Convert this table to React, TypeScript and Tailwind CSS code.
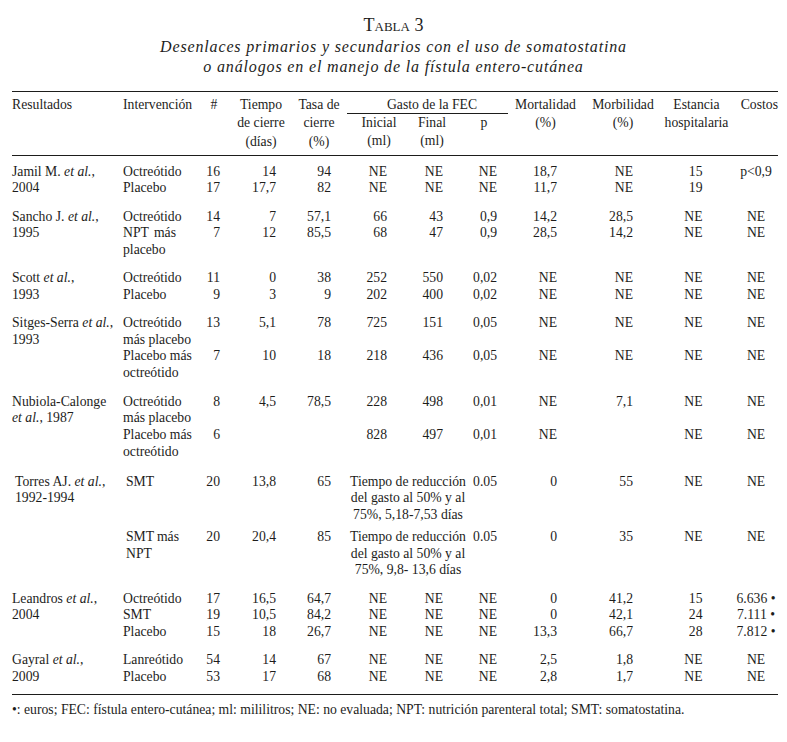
import type { ReactNode } from "react";

type Row = {
  intervention: ReactNode;
  n: string;
  tiempo?: string;
  tasa?: string;
  inicial?: string;
  final?: string;
  gasto?: string[];
  p: string;
  mort?: string;
  morb?: string;
  est?: string;
  cost?: string;
};

type Study = {
  author: ReactNode;
  rows: Row[];
  gap: string;
  indent?: boolean;
};

const Al = () => <i>et al.</i>;

const Spread = ({ a, b }: { a: string; b: string }) => (
  <span className="flex w-[53px] justify-between">
    <span>{a}</span>
    <span>{b}</span>
  </span>
);

const studies: Study[] = [
  {
    author: (<>Jamil M. <Al />,<br />2004</>),
    gap: "pt-0",
    rows: [
      { intervention: "Octreótido", n: "16", tiempo: "14", tasa: "94", inicial: "NE", final: "NE", p: "NE", mort: "18,7", morb: "NE", est: "15", cost: "p<0,9" },
      { intervention: "Placebo", n: "17", tiempo: "17,7", tasa: "82", inicial: "NE", final: "NE", p: "NE", mort: "11,7", morb: "NE", est: "19" },
    ],
  },
  {
    author: (<>Sancho J. <Al />,<br />1995</>),
    gap: "pt-[11.6px]",
    rows: [
      { intervention: "Octreótido", n: "14", tiempo: "7", tasa: "57,1", inicial: "66", final: "43", p: "0,9", mort: "14,2", morb: "28,5", est: "NE", cost: "NE" },
      { intervention: (<><Spread a="NPT" b="más" />placebo</>), n: "7", tiempo: "12", tasa: "85,5", inicial: "68", final: "47", p: "0,9", mort: "28,5", morb: "14,2", est: "NE", cost: "NE" },
    ],
  },
  {
    author: (<>Scott <Al />,<br />1993</>),
    gap: "pt-[11.4px]",
    rows: [
      { intervention: "Octreótido", n: "11", tiempo: "0", tasa: "38", inicial: "252", final: "550", p: "0,02", mort: "NE", morb: "NE", est: "NE", cost: "NE" },
      { intervention: "Placebo", n: "9", tiempo: "3", tasa: "9", inicial: "202", final: "400", p: "0,02", mort: "NE", morb: "NE", est: "NE", cost: "NE" },
    ],
  },
  {
    author: (<>Sitges-Serra <Al />,<br />1993</>),
    gap: "pt-[11.6px]",
    rows: [
      { intervention: (<>Octreótido<br />más placebo</>), n: "13", tiempo: "5,1", tasa: "78", inicial: "725", final: "151", p: "0,05", mort: "NE", morb: "NE", est: "NE", cost: "NE" },
      { intervention: (<>Placebo más<br />octreótido</>), n: "7", tiempo: "10", tasa: "18", inicial: "218", final: "436", p: "0,05", mort: "NE", morb: "NE", est: "NE", cost: "NE" },
    ],
  },
  {
    author: (<>Nubiola-Calonge<br /><Al />, 1987</>),
    gap: "pt-[11.9px]",
    rows: [
      { intervention: (<>Octreótido<br />más placebo</>), n: "8", tiempo: "4,5", tasa: "78,5", inicial: "228", final: "498", p: "0,01", mort: "NE", morb: "7,1", est: "NE", cost: "NE" },
      { intervention: (<>Placebo más<br />octreótido</>), n: "6", inicial: "828", final: "497", p: "0,01", mort: "NE", est: "NE", cost: "NE" },
    ],
  },
  {
    author: (<>Torres AJ. <Al />,<br />1992-1994</>),
    gap: "pt-[13.2px]",
    indent: true,
    rows: [
      { intervention: "SMT", n: "20", tiempo: "13,8", tasa: "65", gasto: ["Tiempo de reducción", "del gasto al 50% y al", "75%, 5,18-7,53 días"], p: "0.05", mort: "0", morb: "55", est: "NE", cost: "NE" },
      { intervention: (<><Spread a="SMT" b="más" />NPT</>), n: "20", tiempo: "20,4", tasa: "85", gasto: ["Tiempo de reducción", "del gasto al 50% y al", "75%, 9,8- 13,6 días"], p: "0.05", mort: "0", morb: "35", est: "NE", cost: "NE" },
    ],
  },
  {
    author: (<>Leandros <Al />,<br />2004</>),
    gap: "pt-[11.5px]",
    rows: [
      { intervention: "Octreótido", n: "17", tiempo: "16,5", tasa: "64,7", inicial: "NE", final: "NE", p: "NE", mort: "0", morb: "41,2", est: "15", cost: "6.636 •" },
      { intervention: "SMT", n: "19", tiempo: "10,5", tasa: "84,2", inicial: "NE", final: "NE", p: "NE", mort: "0", morb: "42,1", est: "24", cost: "7.111 •" },
      { intervention: "Placebo", n: "15", tiempo: "18", tasa: "26,7", inicial: "NE", final: "NE", p: "NE", mort: "13,3", morb: "66,7", est: "28", cost: "7.812 •" },
    ],
  },
  {
    author: (<>Gayral <Al />,<br />2009</>),
    gap: "pt-[11.5px]",
    rows: [
      { intervention: "Lanreótido", n: "54", tiempo: "14", tasa: "67", inicial: "NE", final: "NE", p: "NE", mort: "2,5", morb: "1,8", est: "NE", cost: "NE" },
      { intervention: "Placebo", n: "53", tiempo: "17", tasa: "68", inicial: "NE", final: "NE", p: "NE", mort: "2,8", morb: "1,7", est: "NE", cost: "NE" },
    ],
  },
];

const rowSpans: Record<number, string> = { 2: "row-span-2", 3: "row-span-3" };

function HeadCell({ width, children, align = "items-center" }: { width: string; children: ReactNode; align?: string }) {
  return <div className={`flex shrink-0 flex-col whitespace-nowrap ${width} ${align}`}>{children}</div>;
}

function StudyBlock({ study }: { study: Study }) {
  const num = "text-right whitespace-nowrap";
  return (
    <div className={`grid grid-cols-[111px_77px_20px_56px_55px_56px_56px_54px_60px_76px_70px_75px] ${study.gap}`}>
      <div className={`${rowSpans[study.rows.length]} whitespace-nowrap ${study.indent ? "pl-[3px]" : ""}`}>{study.author}</div>
      {study.rows.map((row, i) => [
        <div className={`whitespace-nowrap ${study.indent ? "pl-[3px]" : ""}`} key={`iv${i}`}>{row.intervention}</div>,
        <div className={num} key={`n${i}`}>{row.n}</div>,
        <div className={num} key={`t${i}`}>{row.tiempo}</div>,
        <div className={num} key={`ts${i}`}>{row.tasa}</div>,
        row.gasto ? (
          <div className={`col-span-2 flex flex-col items-center pl-[42px] whitespace-nowrap ${i === 0 ? "pb-[5px]" : ""}`} key={`g${i}`}>
            {row.gasto.map((line) => (
              <span key={line}>{line}</span>
            ))}
          </div>
        ) : (
          [
            <div className={num} key={`in${i}`}>{row.inicial}</div>,
            <div className={num} key={`f${i}`}>{row.final}</div>,
          ]
        ),
        <div className={num} key={`p${i}`}>{row.p}</div>,
        <div className={num} key={`m${i}`}>{row.mort}</div>,
        <div className={num} key={`mb${i}`}>{row.morb}</div>,
        <div className={`${num} pr-[0.5px]`} key={`e${i}`}>{row.est}</div>,
        <div className="flex justify-center pl-[31px] whitespace-nowrap" key={`c${i}`}>{row.cost}</div>,
      ])}
    </div>
  );
}

export default function App() {
  return (
    <div className="min-h-[742px] w-[787px] bg-white font-['Liberation_Serif',serif] text-[#1d1d1b]">
      <div className="px-[12px] pt-[15px]">
        <p className="text-center text-[18px] leading-[20px] [font-variant:small-caps]">Tabla 3</p>
        <div className="mt-[1.6px] text-center text-[16px] leading-[20px] tracking-[0.85px] italic">
          <p>Desenlaces primarios y secundarios con el uso de somatostatina</p>
          <p>o análogos en el manejo de la fístula entero-cutánea</p>
        </div>

        <div className="mt-[14.4px] w-[766px] border-t border-[#1d1d1b] text-[13.7px]">
          <div className="flex pt-[4px] pb-[3.5px] leading-[18.5px]">
            <HeadCell width="w-[111px]" align="items-start">Resultados</HeadCell>
            <HeadCell width="w-[77px]" align="items-start">Intervención</HeadCell>
            <HeadCell width="w-[28px]">#</HeadCell>
            <HeadCell width="w-[66px]">
              <span>Tiempo</span>
              <span>de cierre</span>
              <span>(días)</span>
            </HeadCell>
            <HeadCell width="w-[50px]">
              <span>Tasa de</span>
              <span>cierre</span>
              <span>(%)</span>
            </HeadCell>
            <div className="flex w-[174px] shrink-0 flex-col">
              <div className="ml-[3px] h-[18px] w-[161px] border-b border-[#1d1d1b] pl-[9px] text-center leading-[17px]">Gasto de la FEC</div>
              <div className="flex">
                <HeadCell width="w-[70px]">
                  <span>Inicial</span>
                  <span>(ml)</span>
                </HeadCell>
                <HeadCell width="w-[36px]">
                  <span>Final</span>
                  <span>(ml)</span>
                </HeadCell>
                <HeadCell width="w-[68px]">p</HeadCell>
              </div>
            </div>
            <HeadCell width="w-[55px]">
              <span>Mortalidad</span>
              <span>(%)</span>
            </HeadCell>
            <HeadCell width="w-[100px]">
              <span>Morbilidad</span>
              <span>(%)</span>
            </HeadCell>
            <HeadCell width="w-[47px]">
              <span>Estancia</span>
              <span>hospitalaria</span>
            </HeadCell>
            <HeadCell width="w-[58px]" align="items-end">Costos</HeadCell>
          </div>

          <div className="border-t border-[#1d1d1b] pt-[7.6px] pb-[8px] leading-[16.7px]">
            {studies.map((study, i) => (
              <StudyBlock key={i} study={study} />
            ))}
          </div>

          <div className="border-t border-[#1d1d1b] pt-[7.8px] text-[13.7px] leading-[16px]">
            •: euros; FEC: fístula entero-cutánea; ml: mililitros; NE: no evaluada; NPT: nutrición parenteral total; SMT: somatostatina.
          </div>
        </div>
      </div>
    </div>
  );
}
